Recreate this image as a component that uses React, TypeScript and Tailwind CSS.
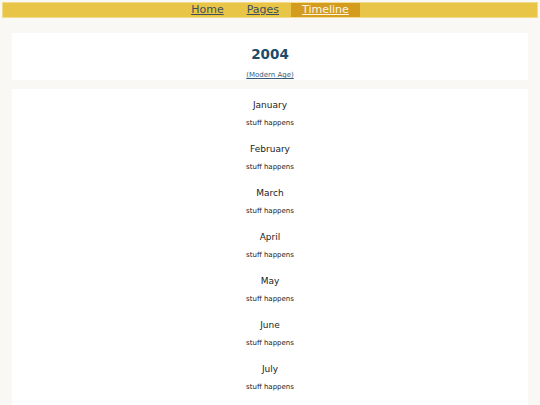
import React from 'react';

const months = ['January', 'February', 'March', 'April', 'May', 'June', 'July', 'August', 'September', 'October', 'November', 'December'];

const navItems = [
  { label: 'Home', active: false },
  { label: 'Pages', active: false },
  { label: 'Timeline', active: true },
];

const App: React.FC = () => {
  return (
    <div className="min-h-screen bg-[#faf8f5] p-[3px] font-['DejaVu_Sans',sans-serif]">
      {/* Top navigation */}
      <nav className="flex h-[14px] justify-center gap-px bg-[#e8c547] shadow-[0_0_0_1px_#f2dc8a]">
        {navItems.map(item => (
          <a
            key={item.label}
            href="#"
            className={`flex items-center px-[11px] text-[11px] leading-[14px] underline ${item.active ? 'bg-[#d49c1e] text-[#fdf6e3]' : 'text-[#3d4f5c]'}`}
          >
            {item.label}
          </a>
        ))}
      </nav>

      <main className="mx-[9px] mt-[16px] flex flex-col gap-[9px]">
        {/* Year header */}
        <section className="flex flex-col items-center bg-white pt-[13px]">
          <h1 className="text-[13.5px] font-bold leading-[16px] text-[#1d4b6b]">2004</h1>
          <a href="#" className="mt-[8px] text-[7px] leading-[10px] text-[#3a5a78] underline">(Modern Age)</a>
        </section>

        {/* Month list */}
        <section className="flex flex-col items-center bg-white pt-[11px]">
          {months.map(m => (
            <div key={m} className="flex flex-col items-center pb-[16px]">
              <h2 className="text-[9px] leading-[11px] text-[#222]">{m}</h2>
              <p className="mt-[8px] text-[7px] leading-[9px] text-[#222]">stuff happens</p>
            </div>
          ))}
        </section>
      </main>
    </div>
  );
};

export default App;
